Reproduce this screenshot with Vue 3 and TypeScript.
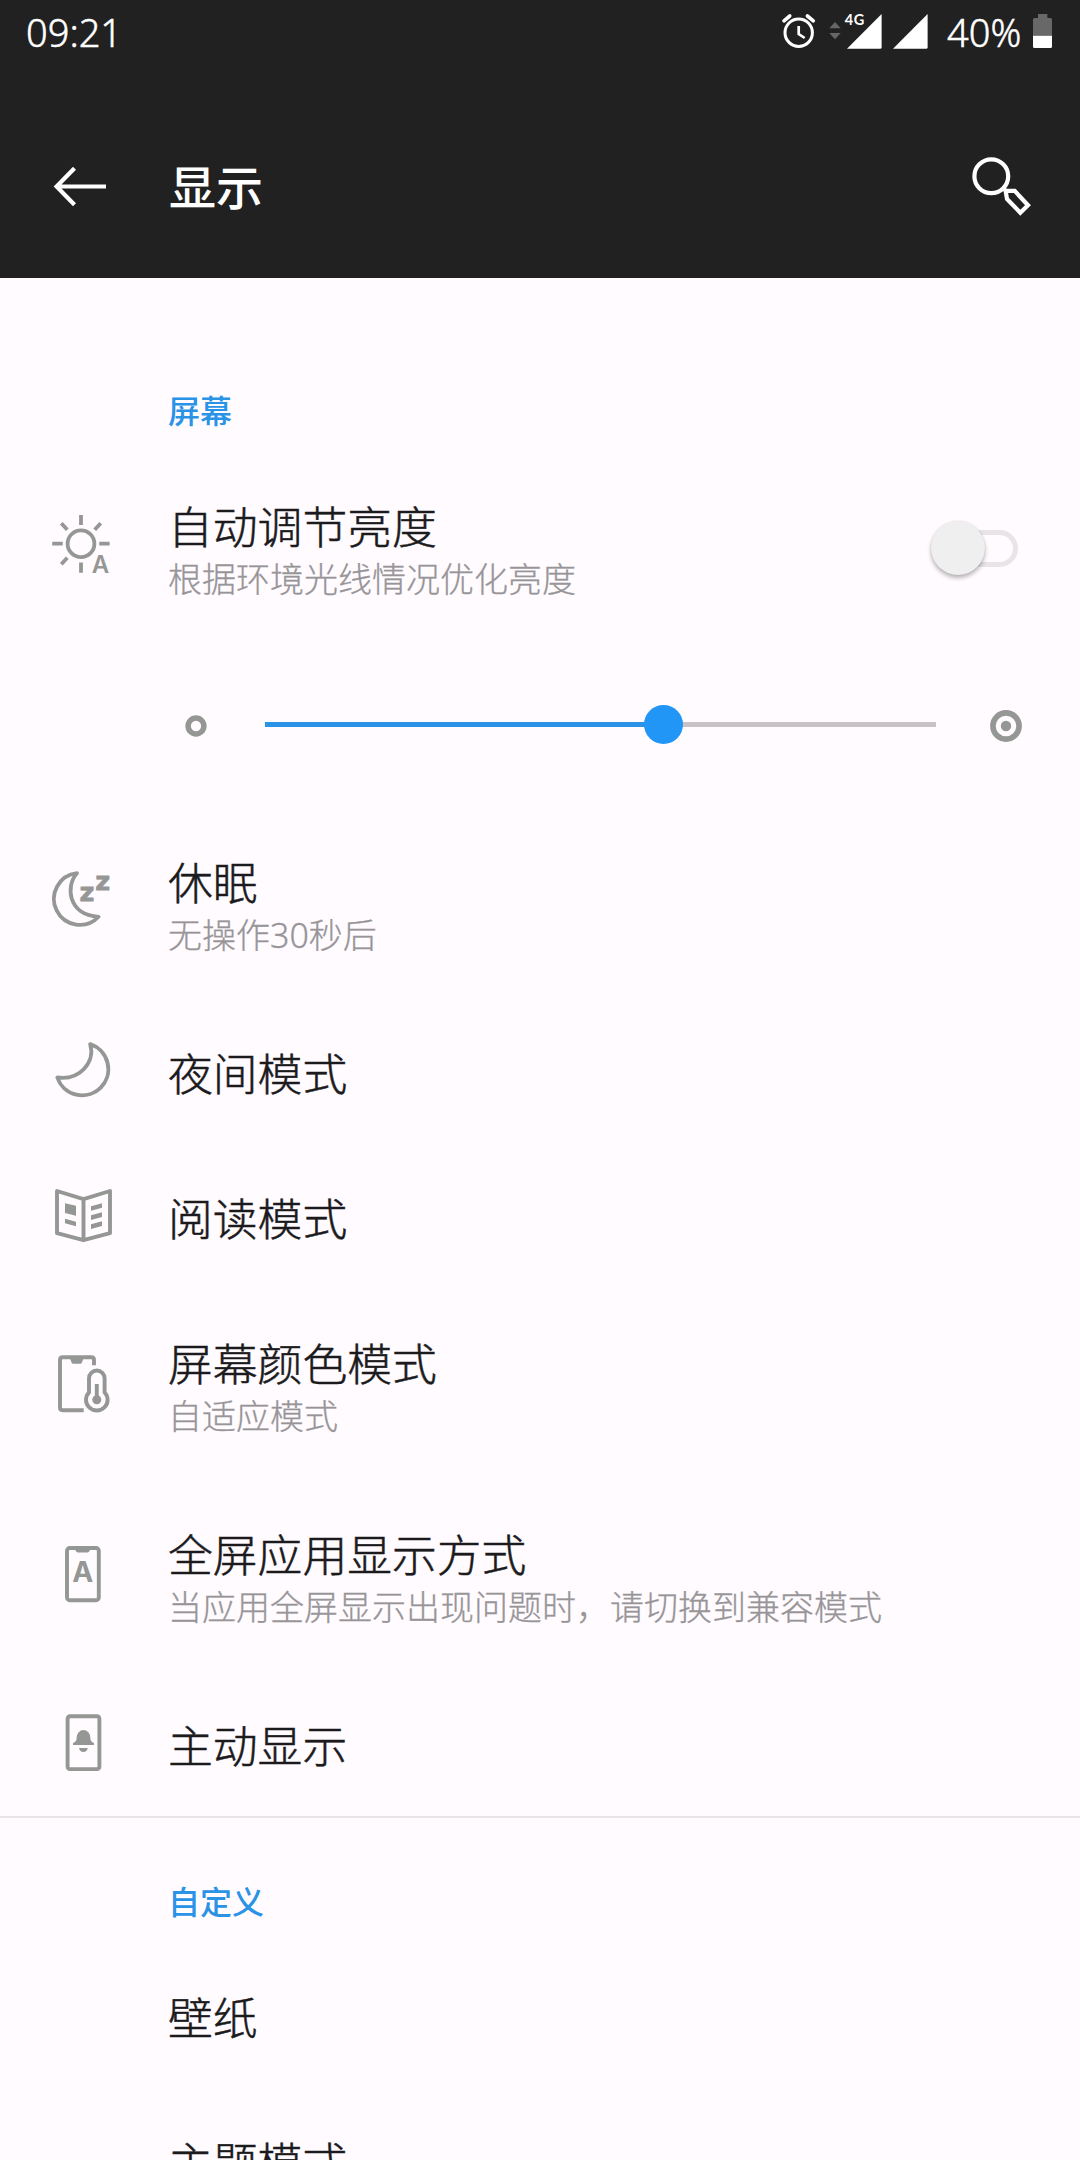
<script setup lang="ts">
interface SettingItem {
  icon?: string
  title: string
  summary?: string
}

const brightness = 59.4

const autoBrightness: SettingItem = { icon: 'sun', title: '自动调节亮度', summary: '根据环境光线情况优化亮度' }

const screenItems: SettingItem[] = [
  { icon: 'sleep', title: '休眠', summary: '无操作30秒后' },
  { icon: 'night', title: '夜间模式' },
  { icon: 'reading', title: '阅读模式' },
  { icon: 'color', title: '屏幕颜色模式', summary: '自适应模式' },
  { icon: 'fullscreen', title: '全屏应用显示方式', summary: '当应用全屏显示出现问题时，请切换到兼容模式' },
  { icon: 'ambient', title: '主动显示' },
]

const customItems: SettingItem[] = [{ title: '壁纸' }, { title: '主题模式' }]
</script>

<template>
  <div class="screen">
    <header class="top">
      <div class="status">
        <span class="time">09:21</span>
        <div class="status-right">
          <svg class="alarm" width="34" height="36" viewBox="0 0 34 36" fill="none" stroke="#fff">
            <circle cx="16.7" cy="19.7" r="13.7" stroke-width="3" />
            <path d="M2 7.8 7.8 3M25.4 3l5.9 4.8" stroke-width="3.6" stroke-linecap="round" />
            <path d="M16.7 13v8l6 4" stroke-width="2.7" />
          </svg>
          <svg class="mobile" width="54" height="36" viewBox="0 0 54 36">
            <path d="M0.3 15.2 6 9l5.7 6.2zM0.3 20 6 26.2 11.7 20z" fill="#666" />
            <path d="M18 35.7 52.6 1v33.2q0 1.5-1.5 1.5z" fill="#fff" />
            <text class="net" x="15.8" y="12">4G</text>
          </svg>
          <svg class="signal" width="36" height="36" viewBox="0 0 36 36">
            <path d="M0 35.7 34.6 1v33.2q0 1.5-1.5 1.5z" fill="#fff" />
          </svg>
          <span class="percent">40%</span>
          <svg class="battery" width="19" height="36" viewBox="0 0 19 36">
            <path d="M5 1h9.3v4H17.6Q19 5 19 6.5V22.7H0V6.5Q0 5 1.4 5H5z" fill="#686868" />
            <path d="M0 22.7h19v10.8q0 1.5-1.5 1.5h-16Q0 35 0 33.5z" fill="#fff" />
          </svg>
        </div>
      </div>
      <div class="bar">
        <svg class="back" width="56" height="48" viewBox="0 0 56 48" fill="none" stroke="#fff" stroke-width="4.2">
          <path d="M54 24.5H5M22.5 6.3 4.6 24.5l17.9 18.2" />
        </svg>
        <h1>显示</h1>
        <svg class="search" width="64" height="64" viewBox="0 0 64 64" fill="none" stroke="#fff" stroke-width="4.2">
          <circle cx="23.3" cy="22.3" r="16.9" />
          <path d="M37.6 36.9h9.1L60 51.2l-7.7 7.5L39 44.9zM35 34l3 3" />
        </svg>
      </div>
    </header>

    <main>
      <h2 class="section first">屏幕</h2>

      <div class="row tall">
        <div class="icon">
          <svg width="72" height="72" viewBox="0 0 72 72" fill="none" stroke="#959795" stroke-width="3.8">
            <circle cx="36" cy="29.7" r="13.4" />
            <path d="M36 1v10M36 48.4v10.3M7.2 29.7h10.5M54.2 29.7h10.4M16.3 9.3l6 6.5M55.7 9.3l-6 6.5M16.3 50.3l6-6.5" />
            <text class="glyph" x="55.6" y="58.7" font-size="24" font-weight="600">A</text>
          </svg>
        </div>
        <div class="label">
          <div class="title">{{ autoBrightness.title }}</div>
          <div class="summary">{{ autoBrightness.summary }}</div>
        </div>
        <div class="switch"><div class="knob"></div></div>
      </div>

      <div class="slider">
        <svg class="dim" width="24" height="24" viewBox="0 0 24 24">
          <circle cx="12" cy="12" r="7.9" fill="none" stroke="#959795" stroke-width="5.5" />
        </svg>
        <div class="track">
          <div class="fill" :style="{ width: brightness + '%' }"></div>
          <div class="thumb" :style="{ left: brightness + '%' }"></div>
        </div>
        <svg class="bright" width="34" height="34" viewBox="0 0 34 34">
          <circle cx="17" cy="17" r="13.1" fill="none" stroke="#959795" stroke-width="5.6" />
          <circle cx="17" cy="17" r="5.2" fill="#959795" />
        </svg>
      </div>

      <div v-for="item in screenItems" :key="item.title" class="row" :class="{ tall: item.summary }">
        <div class="icon">
          <svg v-if="item.icon === 'sleep'" width="72" height="72" viewBox="0 0 72 72" fill="none" stroke="#959795" stroke-width="3.8" stroke-linejoin="round">
            <path d="M32 3.2A25.9 25.9 0 1 0 53.6 46.8C22.5 45 20.5 15.5 32 3.2z" />
            <text class="glyph zed" x="42" y="30.7">z</text>
            <text class="glyph zed" x="57.7" y="20">z</text>
          </svg>
          <svg v-else-if="item.icon === 'night'" width="72" height="72" viewBox="0 0 72 72" fill="none" stroke="#959795" stroke-width="3.9" stroke-linejoin="round">
            <path d="M45.2 6.2A26.2 26.2 0 1 1 12.3 39.5C35.5 42.5 50.5 23.5 45.2 6.2z" />
          </svg>
          <svg v-else-if="item.icon === 'reading'" width="72" height="72" viewBox="0 0 72 72" fill="#959795">
            <path d="M12 8 38.5 16.2 65 8v42.2L38.5 57.2 12 50.2zM38.5 16.2v41" fill="none" stroke="#959795" stroke-width="3.9" stroke-linejoin="round" />
            <path d="M20 20.3l11 2.5v10L20 30zM20 35.8l11 3v4.5l-11-3zM46 23.2l11-3v4.6l-11 3zM46 32.3l11-3v4.6l-11 3zM46 41.3l11-3v4.6l-11 3z" />
          </svg>
          <svg v-else-if="item.icon === 'color'" width="72" height="72" viewBox="0 0 72 72" fill="none" stroke="#959795" stroke-width="3.9">
            <path d="M49 14.3V9q0-2.7-2.7-2.7H17.7Q15 6.3 15 9v47.6q0 2.7 2.7 2.700h21" />
            <path d="M25 7.5h13.5L36.7 12q-.4.8-1.3.8h-7.3q-.9 0-1.3-.8z" fill="#959795" stroke="none" />
            <path d="M44 27.3a7.8 7.8 0 0 1 15.6 0v14a10.8 10.8 0 1 1-15.6 0z" />
            <path d="M51.8 33V49" />
            <circle cx="51.8" cy="48.8" r="4.5" fill="#959795" stroke="none" />
          </svg>
          <svg v-else-if="item.icon === 'fullscreen'" width="72" height="72" viewBox="0 0 72 72" fill="none" stroke="#959795" stroke-width="3.9">
            <rect x="22" y="6" width="31.8" height="52.2" rx="2.8" />
            <path d="M30 7.5h15.3l-1.4 2.3q-.5.7-1.4.7h-9.7q-.9 0-1.4-.7z" fill="#959795" stroke="none" />
            <text class="glyph" x="37.8" y="40.3" font-size="28.2" font-weight="700">A</text>
          </svg>
          <svg v-else width="72" height="72" viewBox="0 0 72 72" fill="none" stroke="#959795" stroke-width="3.9">
            <rect x="22.6" y="6.3" width="31.8" height="52.8" rx="2.4" />
            <path d="M28 35.1V33q3.7-.9 3.7-5.4a6.8 7.600 0 0 1 13.600 0q0 4.500 3.700 5.400v2.100zM34 38.100h8.800q-.8 4-4.400 4t-4.400-4z" fill="#959795" stroke="none" />
          </svg>
        </div>
        <div class="label">
          <div class="title">{{ item.title }}</div>
          <div v-if="item.summary" class="summary">{{ item.summary }}</div>
        </div>
      </div>

      <div class="divider"></div>
      <h2 class="section">自定义</h2>
      <div v-for="item in customItems" :key="item.title" class="row">
        <div class="icon"></div>
        <div class="label"><div class="title">{{ item.title }}</div></div>
      </div>
    </main>
  </div>
</template>

<style>
body {
  overflow: hidden;
}
</style>

<style scoped>
.screen {
  width: 1080px;
  height: 2160px;
  overflow: hidden;
  background: #fffbff;
  color: #1b1a1c;
  font-family: "Noto Sans", "Noto Sans CJK SC", sans-serif;
  font-weight: 300;
}
svg {
  overflow: visible;
}
.top {
  height: 278px;
  background: #212121;
  color: #fff;
}
.status {
  display: flex;
  justify-content: space-between;
  height: 66px;
  padding: 0 28px 0 26px;
  box-sizing: border-box;
  font-size: 38px;
  line-height: 64px;
  -webkit-text-stroke: 0.5px #fff;
}
.status-right {
  display: flex;
}
.status svg {
  flex: none;
  margin-top: 13px;
}
.mobile {
  margin-left: 13px;
}
.signal {
  margin-left: 10px;
}
.percent {
  margin-left: 18px;
  width: 86px;
}
.net {
  font: 700 14.5px Lato, sans-serif;
  letter-spacing: 0.6px;
  fill: #fff;
  -webkit-text-stroke: 0;
}
.bar {
  display: flex;
  align-items: center;
  height: 240px;
}
.back {
  margin-left: 52px;
}
h1 {
  flex: 1;
  margin: 2px 0 0 61px;
  font-size: 47px;
  font-weight: 500;
  line-height: 60px;
}
.search {
  margin-right: 48px;
}
h2.section {
  margin: 0;
  height: 127px;
  padding: 60px 0 0 168px;
  box-sizing: border-box;
  font-size: 32px;
  font-weight: 500;
  line-height: 48px;
  color: #2a93e6;
}
h2.first {
  height: 176px;
  padding-top: 109px;
}
.row {
  display: flex;
  align-items: center;
  height: 145px;
}
.row.tall {
  height: 191px;
}
.icon {
  flex: none;
  width: 123px;
  height: 72px;
  padding-left: 45px;
}
.glyph {
  font-family: Inter, sans-serif;
  text-anchor: middle;
  fill: #959795;
  stroke: none;
}
.zed {
  font: 700 25.6px "DejaVu Sans", sans-serif;
  stroke: #959795;
  stroke-width: 0.8px;
}
.label {
  flex: 1;
}
.tall .label {
  padding-top: 3px;
}
.title {
  font-size: 44.8px;
  line-height: 56px;
  -webkit-text-stroke: 0.5px currentColor;
}
.summary {
  font-size: 34px;
  line-height: 48px;
  color: #979598;
  -webkit-text-stroke: 0.3px currentColor;
}
.switch {
  box-sizing: border-box;
  width: 80px;
  height: 37px;
  margin: 0 62px 3px 0;
  border: 5px solid #e9e4e8;
  border-radius: 19px;
  display: flex;
  align-items: center;
}
.knob {
  flex: none;
  width: 54px;
  height: 54px;
  margin-left: -12px;
  border-radius: 50%;
  background: #eeefee;
  box-shadow: 0 3px 4px rgba(0, 0, 0, 0.28), 0 0 2px rgba(0, 0, 0, 0.1);
}
.slider {
  display: flex;
  align-items: center;
  height: 165px;
  padding: 2px 57px 0 184px;
  box-sizing: border-box;
}
.slider svg {
  flex: none;
  margin-bottom: 5px;
}
.track {
  position: relative;
  flex: 1;
  height: 5px;
  margin: 0 53px 8px 57px;
  background: #c8c2c7;
}
.fill {
  height: 5px;
  background: #2a93e6;
}
.thumb {
  position: absolute;
  top: -17px;
  width: 39px;
  height: 39px;
  margin-left: -19.5px;
  border-radius: 50%;
  background: #2196f6;
}
.divider {
  height: 2px;
  margin-top: -2px;
  background: #e7e4e8;
}
</style>
